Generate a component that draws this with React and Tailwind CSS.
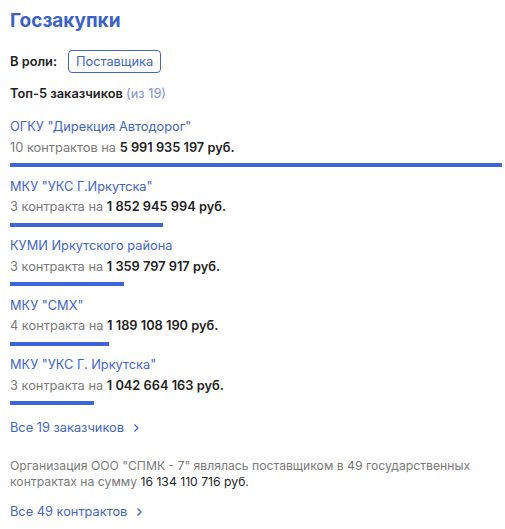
import React from 'react'

const customers = [
  { name: 'ОГКУ "Дирекция Автодорог"', count: '10 контрактов', sum: '5 991 935 197', width: 492 },
  { name: 'МКУ "УКС Г.Иркутска"', count: '3 контракта', sum: '1 852 945 994', width: 153 },
  { name: 'КУМИ Иркутского района', count: '3 контракта', sum: '1 359 797 917', width: 114 },
  { name: 'МКУ "СМХ"', count: '4 контракта', sum: '1 189 108 190', width: 99 },
  { name: 'МКУ "УКС Г. Иркутска"', count: '3 контракта', sum: '1 042 664 163', width: 84 },
]

function Chevron() {
  return (
    <svg width="7" height="10" viewBox="0 0 7 10" className="ml-[9px] mt-[1px]">
      <path d="M1.5 1.5 L5 5 L1.5 8.5" fill="none" stroke="#3f66c9" strokeWidth="1.3" />
    </svg>
  )
}

export default function App() {
  return (
    <div className="bg-white w-[505px] h-[529px] overflow-hidden px-[10px] pt-[9px] font-['Inter','Noto_Sans',sans-serif] text-[12.8px]">
      <h1 className="text-[19px] font-bold text-[#3b62c6] leading-[24px]">Госзакупки</h1>

      {/* роль */}
      <div className="flex items-center mt-[17px] h-[23px]">
        <span className="font-semibold text-[#222]">В роли:</span>
        <span className="ml-[11px] border border-[#3f66c9] rounded-[4px] px-[7px] h-[23px] flex items-center text-[#3f66c9]">
          Поставщика
        </span>
      </div>

      <div className="mt-[11px] leading-[20px]">
        <span className="font-semibold text-[#222]">Топ-5 заказчиков </span>
        <span className="text-[#7d93c9]">(из 19)</span>
      </div>

      {/* список заказчиков */}
      <div className="mt-[13px] flex flex-col">
        {customers.map((c) => (
          <div key={c.name} className="mb-[9.5px]">
            <div className="text-[#3f66c9] leading-[20px]">{c.name}</div>
            <div className="text-[#7a7a7a] leading-[20px] mt-[0.5px]">
              {c.count} на <span className="font-semibold text-[#1f1f1f]">{c.sum} руб.</span>
            </div>
            <div className="h-[4px] bg-[#3c65d8] mt-[5.5px]" style={{ width: c.width }} />
          </div>
        ))}
      </div>

      <div className="flex items-center text-[#3f66c9] leading-[20px] mt-[3px]">
        Все 19 заказчиков <Chevron />
      </div>

      <p className="text-[12.2px] text-[#7a7a7a] leading-[16px] mt-[20px]">
        Организация ООО "СПМК - 7" являлась поставщиком в 49 государственных контрактах на сумму{' '}
        <span className="text-[#1f1f1f]">16 134 110 716 руб.</span>
      </p>

      <div className="flex items-center text-[#3f66c9] leading-[20px] mt-[12px]">
        Все 49 контрактов <Chevron />
      </div>
    </div>
  )
}
